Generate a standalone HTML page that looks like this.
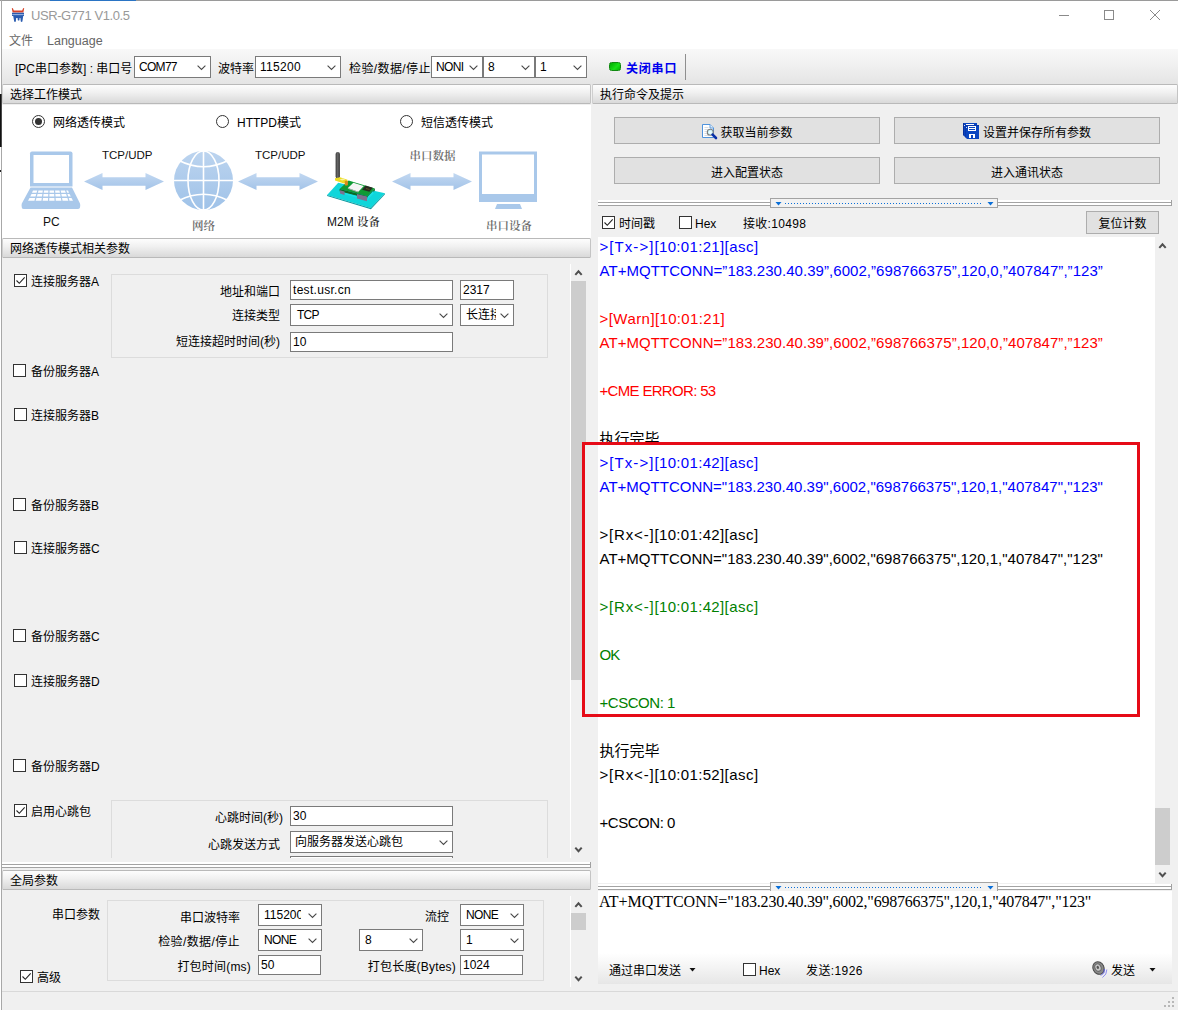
<!DOCTYPE html>
<html lang="zh-CN">
<head>
<meta charset="utf-8">
<title>USR-G771 V1.0.5</title>
<style>
*{box-sizing:border-box;margin:0;padding:0}
html,body{width:1178px;height:1010px;overflow:hidden;background:#f0f0f0}
body{position:relative;font-family:"Liberation Sans","Noto Sans CJK SC",sans-serif;font-size:12px;color:#000;line-height:1}
.a{position:absolute;white-space:nowrap}
.t{position:absolute;white-space:nowrap;line-height:16px;height:16px}
.r{text-align:right}
.hdr{position:absolute;height:20px;border:1px solid #b9b9b9;border-left-color:#cfcfcf;border-right-color:#c4c4c4;border-radius:1.500px;background:linear-gradient(#fdfdfd,#f1f1f1 40%,#d9d9d9);line-height:18px;padding:1px 0 0 7px;white-space:nowrap}
.cb{position:absolute;height:22px;border:1px solid #7a7a7a;background:#fff;line-height:18px;padding:1px 0 0 4px;white-space:nowrap;overflow:hidden}
.cb svg{position:absolute;right:4px;top:8px}
.in{position:absolute;height:20px;border:1px solid #7a7a7a;background:#fff;line-height:17px;padding:1px 0 0 2px;white-space:nowrap;overflow:hidden}
.ck{position:absolute;width:13px;height:13px;border:1px solid #333;background:#fff}
.ck svg{position:absolute;left:0;top:0}
.rd{position:absolute;width:13px;height:13px;border:1px solid #333;border-radius:50%;background:#fff}
.rd.on:after{content:"";position:absolute;left:2px;top:2px;width:7px;height:7px;border-radius:50%;background:#333}
.grp{position:absolute;border:1px solid #dcdcdc;background:#f0f0f0}
.btn{position:absolute;border:1px solid #adadad;background:#e1e1e1;text-align:center;white-space:nowrap}
.log{position:absolute;white-space:nowrap;font-size:15px;line-height:24px;height:24px;left:599.500px}
.blue{color:#0000ff}.red{color:#ff0000}.grn{color:#008000}
</style>
</head>
<body>
<!-- title bar -->
<div class="a" id="titlebar" style="left:2px;top:0;width:1176px;height:31px;background:#fff"></div>
<div class="a" id="menubar" style="left:2px;top:31px;width:1176px;height:18px;background:#fff"></div>
<div class="a" style="left:0;top:0;width:1178px;height:1px;background:#9a9a9a"></div><div class="a" style="left:50px;top:0;width:86px;height:1px;background:#2a74c4"></div>
<div class="a" style="left:1px;top:0;width:1px;height:1010px;background:#a8a8a8"></div>
<div class="a" style="left:0;top:1px;width:1px;height:1009px;background:#fff"></div><div class="a" style="left:0;top:94px;width:1px;height:53px;background:#111"></div><div class="a" style="left:1px;top:94px;width:1px;height:53px;background:#4a4a4a"></div><div class="a" style="left:0;top:170px;width:1px;height:2px;background:#222"></div>

<svg class="a" style="left:11px;top:7px" width="14" height="16" viewBox="0 0 14 16">
<path d="M0.8 1.2 Q1.6 0.6 2 1.6 L2.8 3.6 L11.2 3.6 L12 1.6 Q12.4 0.6 13.2 1.2 L12.4 5.6 L1.6 5.6 Z" fill="#d8442a"/>
<path d="M1 5.8 H13 V9 H12.2 L11.4 14.6 Q10.6 15.4 9.8 14.6 L9.4 11 H8.6 L8.4 13.2 Q7.6 14 6.8 13.2 L6.6 11 H5.2 L4.8 14.6 Q4 15.4 3.2 14.6 L2.2 9 H1 Z" fill="#2a5cb0"/>
<rect x="1.2" y="7.2" width="11.6" height="0.9" fill="#a9c0e6"/>
</svg>
<div class="a" style="left:31px;top:7px;font-size:13px;line-height:17px;color:#999;letter-spacing:-0.42px" id="ttl">USR-G771 V1.0.5</div>
<div class="a" style="left:1059px;top:15px;width:10px;height:1px;background:#8a8a8a"></div>
<div class="a" style="left:1104px;top:10px;width:10px;height:10px;border:1px solid #8a8a8a"></div>
<svg class="a" style="left:1150px;top:10px" width="10" height="10" viewBox="0 0 10 10"><path d="M0 0L10 10M10 0L0 10" stroke="#8a8a8a" stroke-width="1"/></svg>
<div class="a" style="left:9px;top:33px;line-height:16px;color:#666" id="m1">文件</div>
<div class="a" style="left:47px;top:33px;line-height:16px;color:#666;font-size:12.5px" id="m2">Language</div>

<!-- toolbar -->
<div class="a" id="toolbar" style="left:2px;top:49px;width:1176px;height:36px;background:linear-gradient(#f8f8f8,#f0f0f0 45%,#e4e4e4)"></div>
<div class="t" style="left:15px;top:61px" id="tb1">[PC串口参数] : 串口号</div>
<div class="cb" style="left:134px;top:56px;width:77px;letter-spacing:-0.700px">COM77<svg width="9" height="6" viewBox="0 0 9 6"><path d="M0.600 0.600L4.500 4.500L8.400 0.600" fill="none" stroke="#4a4a4a" stroke-width="1.100"/></svg></div>
<div class="t" style="left:218px;top:61px">波特率</div>
<div class="cb" style="left:255px;top:56px;width:86px;letter-spacing:0.300px">115200<svg width="9" height="6" viewBox="0 0 9 6"><path d="M0.600 0.600L4.500 4.500L8.400 0.600" fill="none" stroke="#4a4a4a" stroke-width="1.100"/></svg></div>
<div class="t" style="left:349px;top:61px;letter-spacing:0.4px">检验/数据/停止</div>
<div class="cb" style="left:431px;top:56px;width:52px;letter-spacing:-0.6px">NONI<svg width="9" height="6" viewBox="0 0 9 6"><path d="M0.600 0.600L4.500 4.500L8.400 0.600" fill="none" stroke="#4a4a4a" stroke-width="1.100"/></svg></div>
<div class="cb" style="left:483px;top:56px;width:52px">8<svg width="9" height="6" viewBox="0 0 9 6"><path d="M0.600 0.600L4.500 4.500L8.400 0.600" fill="none" stroke="#4a4a4a" stroke-width="1.100"/></svg></div>
<div class="cb" style="left:535px;top:56px;width:52px">1<svg width="9" height="6" viewBox="0 0 9 6"><path d="M0.600 0.600L4.500 4.500L8.400 0.600" fill="none" stroke="#4a4a4a" stroke-width="1.100"/></svg></div>
<div class="a" style="left:609px;top:62px;width:12px;height:9px;border-radius:2.500px;background:linear-gradient(135deg,#00a800,#19e019 60%,#00b400);border:1px solid #0f8a0f"></div>
<div class="t" style="left:626px;top:61px;font-weight:bold;color:#0000ee;letter-spacing:0.800px" id="tb9">关闭串口</div>
<div class="a" style="left:685px;top:54px;width:1px;height:26px;background:#8f8f8f"></div>

<!-- section headers -->
<div class="hdr" style="left:2px;top:84px;width:589px">选择工作模式</div>
<div class="hdr" style="left:592px;top:84px;width:586px">执行命令及提示</div>
<div class="a" style="left:2px;top:105px;width:589px;height:133px;background:#fff"></div>
<div class="hdr" style="left:2px;top:238px;width:589px">网络透传模式相关参数</div>
<div class="hdr" style="left:2px;top:870px;width:589px">全局参数</div>

<!-- mode section -->
<div class="rd on" style="left:32px;top:115px"></div>
<div class="t" style="left:53px;top:115px">网络透传模式</div>
<div class="rd" style="left:216px;top:115px"></div>
<div class="t" style="left:237px;top:115px">HTTPD模式</div>
<div class="rd" style="left:400px;top:115px"></div>
<div class="t" style="left:421px;top:115px">短信透传模式</div>
<!-- laptop -->
<svg class="a" style="left:20px;top:150px" width="62" height="61" viewBox="0 0 62 61">
<path d="M12 1.500H50.500Q52.500 1.500 52.500 3.500V36.500H10V3.500Q10 1.500 12 1.500Z" fill="#a9c8ea"/>
<rect x="13.500" y="5" width="35.500" height="28" fill="#fff"/>
<path d="M10.500 37.500H52L60 53.500Q60.500 55 60 57.500Q59.500 59 57.500 59H4Q2 59 1.800 57.500Q1.300 55 1.800 53.500Z" fill="#a9c8ea"/>
<g fill="#fff"><path d="M13 40.500H48L49 42.700H12Z"/><path d="M11.500 44H49.500L50.800 46.500H10.200Z"/><path d="M9.500 48H51.500L53 50.800H8Z"/></g>
<g stroke="#a9c8ea" stroke-width="1.200"><path d="M18 40L15 51M23.500 40L22 51M29 40L28.600 51M34.500 40L35.200 51M40 40L42 51M45.500 40L49 51"/></g>
</svg>
<svg class="a" style="left:84px;top:173px" width="80" height="17" viewBox="0 0 80 17"><defs><linearGradient id="ag1" x1="0" x2="0" y1="0" y2="1"><stop offset="0" stop-color="#c2d8f1"/><stop offset="1" stop-color="#a3c3e8"/></linearGradient></defs><path d="M0 8.5L18.500 0V4.200H61.500V0L80 8.500L61.500 17V12.800H18.500V17Z" fill="url(#ag1)"/></svg>
<div class="a" style="left:102px;top:148px;font-size:11.5px;line-height:14px;color:#111">TCP/UDP</div>
<!-- globe -->
<svg class="a" style="left:173px;top:150px" width="61" height="61" viewBox="0 0 61 61">
<defs><linearGradient id="gg" x1="0" x2="0" y1="0" y2="1"><stop offset="0" stop-color="#bcd4ef"/><stop offset="1" stop-color="#9fc2e8"/></linearGradient></defs>
<circle cx="30.500" cy="30.500" r="29.500" fill="url(#gg)"/>
<g fill="none" stroke="#fff" stroke-width="1.600">
<path d="M30.500 1V60M1 30.500H60"/>
<ellipse cx="30.500" cy="30.500" rx="15.500" ry="29.500"/>
<path d="M6 10.500Q30.500 23 55 10.500M6 50.500Q30.500 38 55 50.500"/>
</g>
</svg>
<svg class="a" style="left:238px;top:173px" width="80" height="17" viewBox="0 0 80 17"><defs><linearGradient id="ag2" x1="0" x2="0" y1="0" y2="1"><stop offset="0" stop-color="#c2d8f1"/><stop offset="1" stop-color="#a3c3e8"/></linearGradient></defs><path d="M0 8.5L18.500 0V4.200H61.500V0L80 8.500L61.500 17V12.800H18.500V17Z" fill="url(#ag2)"/></svg>
<div class="a" style="left:255px;top:148px;font-size:11.5px;line-height:14px;color:#111">TCP/UDP</div>
<div class="a" style="left:43px;top:215px;font-size:12px;line-height:14px;color:#111">PC</div>
<div class="a" style="left:192px;top:219px;font-size:11.500px;line-height:14px;color:#6a6a6a;font-weight:600;font-family:'Liberation Serif','Noto Serif CJK SC',serif">网络</div>
<!-- m2m device -->
<svg class="a" style="left:325px;top:150px" width="62" height="60" viewBox="0 0 62 60">
<defs><linearGradient id="ant" x1="0" x2="1" y1="0" y2="0"><stop offset="0" stop-color="#3a3a3a"/><stop offset="0.5" stop-color="#6a6a6a"/><stop offset="1" stop-color="#2e2e2e"/></linearGradient></defs>
<path d="M2.100 44.900L13.200 32.800L60 43.200L45.700 58.100Z" fill="#0fd6da"/>
<path d="M2.100 44.900L45.700 58.100L60 43.200L60 44.200L45.900 59.200L2.100 45.900Z" fill="#0b9aa0"/>
<path d="M14.600 39L23.600 30.400L49.900 38.400L42.300 46Z" fill="#0f9a34"/>
<path d="M14.600 39L42.300 46L49.900 38.400V40.600L42.500 48.400L14.600 41.200Z" fill="#0a6a26"/>
<path d="M15 40.200L19.500 41.400V45L15 43.600Z" fill="#7d7090"/>
<path d="M32 44L42 46.600V51.200L32 48.400Z" fill="#7d7090"/>
<path d="M42.300 47L48.500 40.500V43.500L42.300 50Z" fill="#19e0e6"/>
<path d="M20 43L31.500 46V47.500L20 44.400Z" fill="#19e0e6"/>
<path d="M22.900 38L28.400 32.800L38.800 35.900L33.300 41.800Z" fill="#f4f4f4"/>
<path d="M22.900 38L33.300 41.800L33.300 42.600L22.900 38.800Z" fill="#b9b0c0"/>
<path d="M37.100 39.700L40.500 35.600L47.800 37.700L44.400 41.800Z" fill="#2a2a22"/>
<path d="M41 38.500L44.500 39.500" stroke="#6a5a20" stroke-width="0.800"/>
<rect x="10.600" y="2" width="4.300" height="26.500" rx="2" fill="url(#ant)"/>
<path d="M10 28.300L15 27.300L22.500 29.800V32.400L19 33.400L10 30.600Z" fill="#eddc22"/>
<path d="M14.500 29.300L18 28.600L20.500 29.600L17 30.500Z" fill="#f8f2a0"/>
<rect x="19.800" y="30.700" width="3.100" height="4.900" rx="0.800" fill="#d98a1e"/>
</svg>
<div class="a" style="left:327px;top:215px;font-size:12px;line-height:14px;color:#111">M2M <span style="font-family:'Liberation Serif','Noto Serif CJK SC',serif;color:#333;font-weight:600;font-size:11.500px">设备</span></div>
<svg class="a" style="left:392px;top:173px" width="80" height="17" viewBox="0 0 80 17"><defs><linearGradient id="ag3" x1="0" x2="0" y1="0" y2="1"><stop offset="0" stop-color="#c2d8f1"/><stop offset="1" stop-color="#a3c3e8"/></linearGradient></defs><path d="M0 8.5L18.500 0V4.200H61.500V0L80 8.500L61.500 17V12.800H18.500V17Z" fill="url(#ag3)"/></svg>
<div class="a" style="left:409.500px;top:149px;font-size:11.500px;line-height:14px;color:#6a6a6a;font-weight:600;font-family:'Liberation Serif','Noto Serif CJK SC',serif">串口数据</div>
<!-- monitor -->
<svg class="a" style="left:478px;top:150px" width="60" height="60" viewBox="0 0 60 60">
<rect x="1" y="1.500" width="58" height="50.500" fill="#a9c8ea"/>
<rect x="4" y="4.500" width="52" height="39.500" fill="#fff"/>
<path d="M19 54H42L44 59H17Z" fill="#a9c8ea"/>
</svg>
<div class="a" style="left:486px;top:219px;font-size:11.500px;line-height:14px;color:#6a6a6a;font-weight:600;font-family:'Liberation Serif','Noto Serif CJK SC',serif">串口设备</div>

<!-- params panel -->
<div class="ck" style="left:14px;top:274px"><svg width="11" height="11" viewBox="0 0 11 11"><path d="M1.5 5.500L4.300 8.300L9.700 2.300" fill="none" stroke="#222" stroke-width="1.100"/></svg></div><div class="t" style="left:31px;top:274px">连接服务器A</div>
<div class="ck" style="left:13px;top:364px"></div><div class="t" style="left:31px;top:364px">备份服务器A</div>
<div class="ck" style="left:14px;top:408px"></div><div class="t" style="left:31px;top:408px">连接服务器B</div>
<div class="ck" style="left:13px;top:498px"></div><div class="t" style="left:31px;top:498px">备份服务器B</div>
<div class="ck" style="left:14px;top:541px"></div><div class="t" style="left:31px;top:541px">连接服务器C</div>
<div class="ck" style="left:13px;top:629px"></div><div class="t" style="left:31px;top:629px">备份服务器C</div>
<div class="ck" style="left:14px;top:674px"></div><div class="t" style="left:31px;top:674px">连接服务器D</div>
<div class="ck" style="left:13px;top:759px"></div><div class="t" style="left:31px;top:759px">备份服务器D</div>
<div class="ck" style="left:14px;top:804px"><svg width="11" height="11" viewBox="0 0 11 11"><path d="M1.5 5.500L4.300 8.300L9.700 2.300" fill="none" stroke="#222" stroke-width="1.100"/></svg></div><div class="t" style="left:31px;top:804px">启用心跳包</div>

<div class="grp" style="left:111px;top:274px;width:437px;height:84px"></div>
<div class="t r" style="left:131px;width:149px;top:284px">地址和端口</div>
<div class="in" style="left:290px;top:280px;width:163px;letter-spacing:0.3px">test.usr.cn</div>
<div class="in" style="left:460px;top:280px;width:54px">2317</div>
<div class="t r" style="left:131px;width:149px;top:308px">连接类型</div>
<div class="cb" style="left:290px;top:304px;width:163px;padding-left:6px;letter-spacing:-0.8px">TCP<svg width="9" height="6" viewBox="0 0 9 6"><path d="M0.600 0.600L4.500 4.500L8.400 0.600" fill="none" stroke="#4a4a4a" stroke-width="1.100"/></svg></div>
<div class="cb" style="left:460px;top:304px;width:54px;padding-left:5px"><span style="display:inline-block;width:30px;overflow:hidden;vertical-align:top">长连接</span><svg width="9" height="6" viewBox="0 0 9 6"><path d="M0.600 0.600L4.500 4.500L8.400 0.600" fill="none" stroke="#4a4a4a" stroke-width="1.100"/></svg></div>
<div class="t r" style="left:131px;width:149px;top:334px">短连接超时时间(秒)</div>
<div class="in" style="left:290px;top:332px;width:163px">10</div>

<div class="a" style="left:111px;top:800px;width:437px;height:58px;overflow:hidden"><div class="grp" style="left:0;top:0;width:437px;height:90px"></div></div>
<div class="t r" style="left:131px;width:152px;top:810px">心跳时间(秒)</div>
<div class="in" style="left:290px;top:806px;width:163px">30</div>
<div class="t r" style="left:131px;width:149px;top:837px">心跳发送方式</div>
<div class="cb" style="left:290px;top:831px;width:163px;padding-left:4px">向服务器发送心跳包<svg width="9" height="6" viewBox="0 0 9 6"><path d="M0.600 0.600L4.500 4.500L8.400 0.600" fill="none" stroke="#4a4a4a" stroke-width="1.100"/></svg></div>
<div class="a" style="left:290px;top:856px;width:163px;height:2px;border:1px solid #7a7a7a;border-bottom:0;background:#fff"></div>
<!-- left scrollbar -->
<div class="a" style="left:570px;top:264px;width:1px;height:594px;background:#fff"></div>
<div class="a" style="left:571px;top:281px;width:15px;height:399px;background:#cdcdcd"></div>
<svg class="a" style="left:574px;top:269px" width="9" height="7" viewBox="0 0 9 7"><path d="M1.300 5.900L4.500 2.300L7.700 5.900" fill="none" stroke="#505050" stroke-width="2"/></svg>
<svg class="a" style="left:574px;top:846px" width="9" height="7" viewBox="0 0 9 7"><path d="M1.300 1.600L4.500 5.200L7.700 1.600" fill="none" stroke="#505050" stroke-width="2"/></svg>
<!-- splitter -->
<div class="a" style="left:2px;top:862px;width:589px;height:6px;background:#fff;border-right:1px solid #a0a0a0"><div class="a" style="left:0;top:2px;width:588px;height:1px;background:#a3a3a3"></div><div class="a" style="left:0;top:5px;width:588px;height:1px;background:#a3a3a3"></div></div>

<!-- global params -->
<div class="t" style="left:52px;top:907px">串口参数</div>
<div class="grp" style="left:107px;top:900px;width:437px;height:81px"></div>
<div class="t r" style="left:120px;width:120px;top:910px">串口波特率</div>
<div class="cb" style="left:258px;top:904px;width:64px;padding-left:5px"><span style="display:inline-block;width:37px;overflow:hidden;vertical-align:top">115200</span><svg width="9" height="6" viewBox="0 0 9 6"><path d="M0.600 0.600L4.500 4.500L8.400 0.600" fill="none" stroke="#4a4a4a" stroke-width="1.100"/></svg></div>
<div class="t r" style="left:120px;width:120px;top:934px;letter-spacing:0.4px">检验/数据/停止</div>
<div class="cb" style="left:258px;top:929px;width:64px;padding-left:5px;letter-spacing:-0.6px">NONE<svg width="9" height="6" viewBox="0 0 9 6"><path d="M0.600 0.600L4.500 4.500L8.400 0.600" fill="none" stroke="#4a4a4a" stroke-width="1.100"/></svg></div>
<div class="t r" style="left:120px;width:131px;top:959px;letter-spacing:0.2px">打包时间(ms)</div>
<div class="in" style="left:258px;top:955px;width:63px">50</div>
<div class="t r" style="left:380px;width:69px;top:909px">流控</div>
<div class="cb" style="left:460px;top:904px;width:64px;padding-left:5px;letter-spacing:-0.6px">NONE<svg width="9" height="6" viewBox="0 0 9 6"><path d="M0.600 0.600L4.500 4.500L8.400 0.600" fill="none" stroke="#4a4a4a" stroke-width="1.100"/></svg></div>
<div class="cb" style="left:359px;top:929px;width:64px;padding-left:5px">8<svg width="9" height="6" viewBox="0 0 9 6"><path d="M0.600 0.600L4.500 4.500L8.400 0.600" fill="none" stroke="#4a4a4a" stroke-width="1.100"/></svg></div>
<div class="cb" style="left:460px;top:929px;width:64px;padding-left:5px">1<svg width="9" height="6" viewBox="0 0 9 6"><path d="M0.600 0.600L4.500 4.500L8.400 0.600" fill="none" stroke="#4a4a4a" stroke-width="1.100"/></svg></div>
<div class="t r" style="left:340px;width:116px;top:959px;letter-spacing:0.2px">打包长度(Bytes)</div>
<div class="in" style="left:460px;top:955px;width:63px">1024</div>
<div class="ck" style="left:20px;top:970px"><svg width="11" height="11" viewBox="0 0 11 11"><path d="M1.5 5.500L4.300 8.300L9.700 2.300" fill="none" stroke="#222" stroke-width="1.100"/></svg></div><div class="t" style="left:37px;top:970px">高级</div>
<div class="a" style="left:570px;top:896px;width:1px;height:91px;background:#fff"></div>
<div class="a" style="left:571px;top:913px;width:15px;height:17px;background:#cdcdcd"></div>
<svg class="a" style="left:574px;top:901px" width="9" height="7" viewBox="0 0 9 7"><path d="M1.300 5.900L4.500 2.300L7.700 5.900" fill="none" stroke="#505050" stroke-width="2"/></svg>
<svg class="a" style="left:574px;top:975px" width="9" height="7" viewBox="0 0 9 7"><path d="M1.300 1.600L4.500 5.200L7.700 1.600" fill="none" stroke="#505050" stroke-width="2"/></svg>
<!-- status bar -->
<div class="a" style="left:2px;top:991px;width:1176px;height:1px;background:#d9d9d9"></div>
<svg class="a" style="left:1164px;top:997px" width="12" height="12" viewBox="0 0 12 12"><g fill="#b8b8b8"><rect x="8" y="0" width="2" height="2"/><rect x="4" y="4" width="2" height="2"/><rect x="8" y="4" width="2" height="2"/><rect x="0" y="8" width="2" height="2"/><rect x="4" y="8" width="2" height="2"/><rect x="8" y="8" width="2" height="2"/></g></svg>
<!-- middle divider -->


<!-- right panel -->
<div class="btn" style="left:614px;top:117px;width:266px;height:27px;line-height:31px;text-align:left;padding-left:105.500px">获取当前参数</div>
<svg class="a" style="left:701px;top:123px" width="17" height="17" viewBox="0 0 17 17"><path d="M1.500 1.500H9L12.500 5V14.500H1.500Z" fill="#fff" stroke="#4f93dc"/><path d="M9 1.500V5H12.500" fill="#e4effa" stroke="#4f93dc" stroke-width="0.900"/><path d="M3.500 4.500H7.500M3.500 6.500H7M3.500 8.500H6M3.500 10.500H6M3.500 12.500H8" stroke="#d5d9de" stroke-width="0.900"/><circle cx="9.300" cy="9.300" r="3" fill="#c9f3f8" stroke="#7d7d7d" stroke-width="1.100"/><circle cx="9.300" cy="9.300" r="1.600" fill="#ecfdff"/><path d="M11.600 11.600L15 15" stroke="#0a32a8" stroke-width="2.600" stroke-linecap="round"/></svg>
<div class="btn" style="left:894px;top:117px;width:266px;height:27px;line-height:31px;text-align:left;padding-left:88px">设置并保存所有参数</div>
<svg class="a" style="left:963px;top:123px" width="16" height="16" viewBox="0 0 16 16"><path d="M0 0H14V14H2L0 12Z" fill="#0a45c0"/><path d="M0 0H1V12.500L0 12Z" fill="#0a2f9a"/><path d="M3 1H11V2H3Z" fill="#fff"/><rect x="1" y="2" width="1" height="1" fill="#cfe0ff"/><path d="M2 2H16V16H4L2 14Z" fill="#0a45c0"/><path d="M2 2H3V14.500L2 14Z M2 2H16V3H2Z" fill="#0a37aa"/><rect x="3" y="4" width="1" height="1" fill="#cfe0ff"/><rect x="5" y="3" width="8" height="5" fill="#fff"/><path d="M6 4.500H12M6 6.500H12" stroke="#0a45c0" stroke-width="1"/><rect x="6" y="11" width="6" height="4" fill="#fff"/><rect x="8" y="12" width="2" height="3" fill="#0a45c0"/></svg>
<div class="btn" style="left:614px;top:157px;width:266px;height:27px;line-height:31px">进入配置状态</div>
<div class="btn" style="left:894px;top:157px;width:266px;height:27px;line-height:31px">进入通讯状态</div>
<div class="a" style="left:598px;top:200px;width:574px;height:6px;background:#fff;border-right:1px solid #a0a0a0"><div class="a" style="left:0;top:2px;width:573px;height:1px;background:#a3a3a3"></div><div class="a" style="left:0;top:5px;width:573px;height:1px;background:#a3a3a3"></div></div>
<svg class="a" style="left:770px;top:198px" width="228" height="10" viewBox="0 0 228 10"><rect x="0.500" y="0.500" width="227" height="9" fill="#f2f2f2" stroke="#a3a3a3"/><path d="M5.500 4H11.500L8.500 7.500Z M217.500 4H223.500L220.500 7.500Z" fill="#0a6fd8"/><g fill="#0a6fd8"><rect x="15" y="5" width="1" height="1"/><rect x="18" y="5" width="1" height="1"/><rect x="21" y="5" width="1" height="1"/><rect x="24" y="5" width="1" height="1"/><rect x="27" y="5" width="1" height="1"/><rect x="30" y="5" width="1" height="1"/><rect x="33" y="5" width="1" height="1"/><rect x="36" y="5" width="1" height="1"/><rect x="39" y="5" width="1" height="1"/><rect x="42" y="5" width="1" height="1"/><rect x="45" y="5" width="1" height="1"/><rect x="48" y="5" width="1" height="1"/><rect x="51" y="5" width="1" height="1"/><rect x="54" y="5" width="1" height="1"/><rect x="57" y="5" width="1" height="1"/><rect x="60" y="5" width="1" height="1"/><rect x="63" y="5" width="1" height="1"/><rect x="66" y="5" width="1" height="1"/><rect x="69" y="5" width="1" height="1"/><rect x="72" y="5" width="1" height="1"/><rect x="75" y="5" width="1" height="1"/><rect x="78" y="5" width="1" height="1"/><rect x="81" y="5" width="1" height="1"/><rect x="84" y="5" width="1" height="1"/><rect x="87" y="5" width="1" height="1"/><rect x="90" y="5" width="1" height="1"/><rect x="93" y="5" width="1" height="1"/><rect x="96" y="5" width="1" height="1"/><rect x="99" y="5" width="1" height="1"/><rect x="102" y="5" width="1" height="1"/><rect x="105" y="5" width="1" height="1"/><rect x="108" y="5" width="1" height="1"/><rect x="111" y="5" width="1" height="1"/><rect x="114" y="5" width="1" height="1"/><rect x="117" y="5" width="1" height="1"/><rect x="120" y="5" width="1" height="1"/><rect x="123" y="5" width="1" height="1"/><rect x="126" y="5" width="1" height="1"/><rect x="129" y="5" width="1" height="1"/><rect x="132" y="5" width="1" height="1"/><rect x="135" y="5" width="1" height="1"/><rect x="138" y="5" width="1" height="1"/><rect x="141" y="5" width="1" height="1"/><rect x="144" y="5" width="1" height="1"/><rect x="147" y="5" width="1" height="1"/><rect x="150" y="5" width="1" height="1"/><rect x="153" y="5" width="1" height="1"/><rect x="156" y="5" width="1" height="1"/><rect x="159" y="5" width="1" height="1"/><rect x="162" y="5" width="1" height="1"/><rect x="165" y="5" width="1" height="1"/><rect x="168" y="5" width="1" height="1"/><rect x="171" y="5" width="1" height="1"/><rect x="174" y="5" width="1" height="1"/><rect x="177" y="5" width="1" height="1"/><rect x="180" y="5" width="1" height="1"/><rect x="183" y="5" width="1" height="1"/><rect x="186" y="5" width="1" height="1"/><rect x="189" y="5" width="1" height="1"/><rect x="192" y="5" width="1" height="1"/><rect x="195" y="5" width="1" height="1"/><rect x="198" y="5" width="1" height="1"/><rect x="201" y="5" width="1" height="1"/><rect x="204" y="5" width="1" height="1"/><rect x="207" y="5" width="1" height="1"/><rect x="210" y="5" width="1" height="1"/></g></svg>
<div class="ck" style="left:602px;top:216px"><svg width="11" height="11" viewBox="0 0 11 11"><path d="M1.5 5.500L4.300 8.300L9.700 2.300" fill="none" stroke="#222" stroke-width="1.100"/></svg></div><div class="t" style="left:619px;top:216px">时间戳</div>
<div class="ck" style="left:679px;top:216px"></div><div class="t" style="left:695px;top:216px">Hex</div>
<div class="t" style="left:743px;top:216px;letter-spacing:0.3px">接收:10498</div>
<div class="btn" style="left:1086px;top:211px;width:73px;height:23px;line-height:25px">复位计数</div>
<div class="a" id="logbg" style="left:598px;top:237px;width:557px;height:646px;background:#fff"></div>
<svg class="a" style="left:1158px;top:242px" width="9" height="7" viewBox="0 0 9 7"><path d="M1.300 5.900L4.500 2.300L7.700 5.900" fill="none" stroke="#505050" stroke-width="2"/></svg>
<svg class="a" style="left:1158px;top:871px" width="9" height="7" viewBox="0 0 9 7"><path d="M1.300 1.600L4.500 5.200L7.700 1.600" fill="none" stroke="#505050" stroke-width="2"/></svg>
<div class="a" style="left:1155px;top:808px;width:15px;height:57px;background:#cdcdcd"></div>
<div class="log blue" style="top:235px"><span style="letter-spacing:1.07px">&gt;[Tx-&gt;]</span><span style="letter-spacing:0.33px">[10:01:21]</span><span style="letter-spacing:0.46px">[asc]</span></div>
<div class="log blue" style="top:259px;letter-spacing:0.052px">AT+MQTTCONN=”183.230.40.39”,6002,”698766375”,120,0,”407847”,”123”</div>
<div class="log red" style="top:307px"><span style="letter-spacing:0.45px">&gt;[Warn]</span><span style="letter-spacing:0.33px">[10:01:21]</span></div>
<div class="log red" style="top:331px;letter-spacing:0.052px">AT+MQTTCONN=”183.230.40.39”,6002,”698766375”,120,0,”407847”,”123”</div>
<div class="log red" style="top:379px;letter-spacing:-0.675px">+CME ERROR: 53</div>
<div class="log " style="top:427px">执行完毕</div>
<div class="log " style="top:739px">执行完毕</div>
<div class="log " style="top:763px"><span style="letter-spacing:0.83px">&gt;[Rx&lt;-]</span><span style="letter-spacing:0.33px">[10:01:52]</span><span style="letter-spacing:0.46px">[asc]</span></div>
<div class="log " style="top:811px;letter-spacing:-0.46px">+CSCON: 0</div>
<div class="a" id="redbox" style="left:582px;top:442px;width:558px;height:275px;border:3px solid #e60b17;background:linear-gradient(90deg,#f0f0f0 13px,#fff 13px)"></div>
<div class="log blue" style="top:451px"><span style="letter-spacing:1.07px">&gt;[Tx-&gt;]</span><span style="letter-spacing:0.33px">[10:01:42]</span><span style="letter-spacing:0.46px">[asc]</span></div>
<div class="log blue" style="top:475px;letter-spacing:0.012px">AT+MQTTCONN="183.230.40.39",6002,"698766375",120,1,"407847","123"</div>
<div class="log " style="top:523px"><span style="letter-spacing:0.83px">&gt;[Rx&lt;-]</span><span style="letter-spacing:0.33px">[10:01:42]</span><span style="letter-spacing:0.46px">[asc]</span></div>
<div class="log " style="top:547px;letter-spacing:0.012px">AT+MQTTCONN="183.230.40.39",6002,"698766375",120,1,"407847","123"</div>
<div class="log grn" style="top:595px"><span style="letter-spacing:0.83px">&gt;[Rx&lt;-]</span><span style="letter-spacing:0.33px">[10:01:42]</span><span style="letter-spacing:0.46px">[asc]</span></div>
<div class="log grn" style="top:643px;letter-spacing:-0.83px">OK</div>
<div class="log grn" style="top:691px;letter-spacing:-0.46px">+CSCON: 1</div>
<div class="a" style="left:598px;top:884px;width:574px;height:6px;background:#fff;border-right:1px solid #a0a0a0"><div class="a" style="left:0;top:2px;width:573px;height:1px;background:#a3a3a3"></div><div class="a" style="left:0;top:5px;width:573px;height:1px;background:#a3a3a3"></div></div>
<svg class="a" style="left:770px;top:882px" width="228" height="10" viewBox="0 0 228 10"><rect x="0.500" y="0.500" width="227" height="9" fill="#f2f2f2" stroke="#a3a3a3"/><path d="M5.500 4H11.500L8.500 7.500Z M217.500 4H223.500L220.500 7.500Z" fill="#0a6fd8"/><g fill="#0a6fd8"><rect x="15" y="5" width="1" height="1"/><rect x="18" y="5" width="1" height="1"/><rect x="21" y="5" width="1" height="1"/><rect x="24" y="5" width="1" height="1"/><rect x="27" y="5" width="1" height="1"/><rect x="30" y="5" width="1" height="1"/><rect x="33" y="5" width="1" height="1"/><rect x="36" y="5" width="1" height="1"/><rect x="39" y="5" width="1" height="1"/><rect x="42" y="5" width="1" height="1"/><rect x="45" y="5" width="1" height="1"/><rect x="48" y="5" width="1" height="1"/><rect x="51" y="5" width="1" height="1"/><rect x="54" y="5" width="1" height="1"/><rect x="57" y="5" width="1" height="1"/><rect x="60" y="5" width="1" height="1"/><rect x="63" y="5" width="1" height="1"/><rect x="66" y="5" width="1" height="1"/><rect x="69" y="5" width="1" height="1"/><rect x="72" y="5" width="1" height="1"/><rect x="75" y="5" width="1" height="1"/><rect x="78" y="5" width="1" height="1"/><rect x="81" y="5" width="1" height="1"/><rect x="84" y="5" width="1" height="1"/><rect x="87" y="5" width="1" height="1"/><rect x="90" y="5" width="1" height="1"/><rect x="93" y="5" width="1" height="1"/><rect x="96" y="5" width="1" height="1"/><rect x="99" y="5" width="1" height="1"/><rect x="102" y="5" width="1" height="1"/><rect x="105" y="5" width="1" height="1"/><rect x="108" y="5" width="1" height="1"/><rect x="111" y="5" width="1" height="1"/><rect x="114" y="5" width="1" height="1"/><rect x="117" y="5" width="1" height="1"/><rect x="120" y="5" width="1" height="1"/><rect x="123" y="5" width="1" height="1"/><rect x="126" y="5" width="1" height="1"/><rect x="129" y="5" width="1" height="1"/><rect x="132" y="5" width="1" height="1"/><rect x="135" y="5" width="1" height="1"/><rect x="138" y="5" width="1" height="1"/><rect x="141" y="5" width="1" height="1"/><rect x="144" y="5" width="1" height="1"/><rect x="147" y="5" width="1" height="1"/><rect x="150" y="5" width="1" height="1"/><rect x="153" y="5" width="1" height="1"/><rect x="156" y="5" width="1" height="1"/><rect x="159" y="5" width="1" height="1"/><rect x="162" y="5" width="1" height="1"/><rect x="165" y="5" width="1" height="1"/><rect x="168" y="5" width="1" height="1"/><rect x="171" y="5" width="1" height="1"/><rect x="174" y="5" width="1" height="1"/><rect x="177" y="5" width="1" height="1"/><rect x="180" y="5" width="1" height="1"/><rect x="183" y="5" width="1" height="1"/><rect x="186" y="5" width="1" height="1"/><rect x="189" y="5" width="1" height="1"/><rect x="192" y="5" width="1" height="1"/><rect x="195" y="5" width="1" height="1"/><rect x="198" y="5" width="1" height="1"/><rect x="201" y="5" width="1" height="1"/><rect x="204" y="5" width="1" height="1"/><rect x="207" y="5" width="1" height="1"/><rect x="210" y="5" width="1" height="1"/></g></svg>
<div class="a" style="left:598px;top:891px;width:574px;height:62px;background:#fff"></div>
<div class="a" style="left:598px;top:953px;width:574px;height:31px;background:linear-gradient(#ffffff,#f3f3f3 50%,#e6e6e6)"></div>
<div class="a" id="sendtxt" style="left:599px;top:892px;font-family:'Liberation Serif',serif;font-size:16px;line-height:19px">AT+MQTTCONN=<span style="letter-spacing:-0.236px">"183.230.40.39",6002,"698766375",120,1,"407847","123"</span></div>
<div class="t" style="left:609px;top:963px">通过串口发送</div>
<svg class="a" style="left:689px;top:968px" width="7" height="4" viewBox="0 0 7 4"><path d="M0.500 0H6.500L3.500 3.500Z" fill="#111"/></svg>
<div class="ck" style="left:743px;top:963px"></div><div class="t" style="left:759px;top:963px">Hex</div>
<div class="t" style="left:806px;top:963px;letter-spacing:0.4px">发送:1926</div>
<svg class="a" style="left:1091px;top:960px" width="19" height="19" viewBox="0 0 19 19"><ellipse cx="7.500" cy="8" rx="5.500" ry="6.500" transform="rotate(-25 7.500 8)" fill="#8a8a8a" stroke="#4a4a4a"/><ellipse cx="7" cy="7.600" rx="3" ry="3.800" transform="rotate(-25 7 7.600)" fill="#c9c9c9" stroke="#666"/><ellipse cx="6.800" cy="7.400" rx="1.200" ry="1.600" transform="rotate(-25 6.800 7.400)" fill="#555"/><path d="M13.500 9Q14 13 10 15.500" fill="none" stroke="#5a5ae0" stroke-width="1"/><path d="M15.800 9.500Q16 14.500 11.500 17.500" fill="none" stroke="#8a8af0" stroke-width="1"/></svg>
<div class="t" style="left:1111px;top:963px">发送</div>
<svg class="a" style="left:1149px;top:968px" width="7" height="4" viewBox="0 0 7 4"><path d="M0.500 0H6.500L3.500 3.500Z" fill="#111"/></svg>

</body>
</html>
